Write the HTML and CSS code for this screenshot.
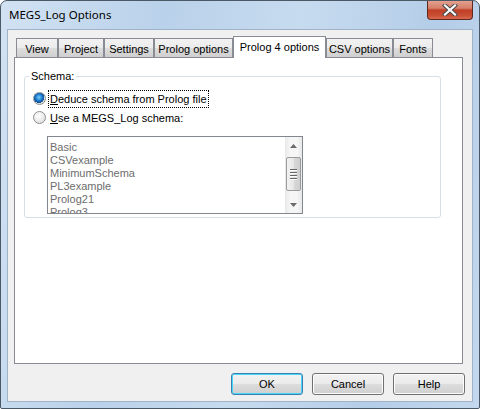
FILE: index.html
```html
<!DOCTYPE html>
<html>
  <head>
    <title>MEGS_Log Options</title>
    <link rel="stylesheet" href="styles.css">
  </head>
  <body>
    <div class="window">
      <div class="titlebar">
        <span class="title">MEGS_Log Options</span>
        <div class="close">
          <svg width="16" height="12" viewBox="0 0 16 12">
            <path d="M3 1.5 L13 10.5 M13 1.5 L3 10.5" stroke="#4a4a4a" stroke-width="4.2" stroke-linecap="square"/>
            <path d="M3 1.5 L13 10.5 M13 1.5 L3 10.5" stroke="#ffffff" stroke-width="2.2" stroke-linecap="square"/>
          </svg>
        </div>
      </div>

      <div class="client">
        <div class="tabctl">
          <div class="tabstrip">
            <div class="tab tab-view">View</div>
            <div class="tab tab-project">Project</div>
            <div class="tab tab-settings">Settings</div>
            <div class="tab tab-prolog">Prolog options</div>
            <div class="tab tab-prolog4 selected">Prolog 4 options</div>
            <div class="tab tab-csv">CSV options</div>
            <div class="tab tab-fonts">Fonts</div>
          </div>
          <div class="tabpanel">
            <fieldset class="group">
              <legend>Schema:</legend>
              <div class="radio-row">
                <span class="radio checked"></span>
                <span class="label focus"><u>D</u>educe schema from Prolog file</span>
              </div>
              <div class="radio-row">
                <span class="radio"></span>
                <span class="label"><u>U</u>se a MEGS_Log schema:</span>
              </div>
              <div class="listbox">
                <ul class="items">
                  <li>Basic</li>
                  <li>CSVexample</li>
                  <li>MinimumSchema</li>
                  <li>PL3example</li>
                  <li>Prolog21</li>
                  <li>Prolog3</li>
                </ul>
                <div class="scrollbar">
                  <div class="arrow">
                    <svg width="7" height="4" viewBox="0 0 7 4"><path d="M0 4 L3.5 0 L7 4 Z" fill="#6b6b6b"/></svg>
                  </div>
                  <div class="track">
                    <div class="thumb">
                      <span class="grip"></span>
                      <span class="grip"></span>
                      <span class="grip"></span>
                      <span class="grip"></span>
                    </div>
                  </div>
                  <div class="arrow">
                    <svg width="7" height="4" viewBox="0 0 7 4"><path d="M0 0 L7 0 L3.5 4 Z" fill="#6b6b6b"/></svg>
                  </div>
                </div>
              </div>
            </fieldset>
          </div>
        </div>

        <div class="buttons">
          <div class="btn default">OK</div>
          <div class="btn">Cancel</div>
          <div class="btn">Help</div>
        </div>
      </div>
    </div>
  </body>
</html>
```

FILE: styles.css
```css
body {
  margin: 0;
  font-family: "Liberation Sans", Arial, sans-serif;
  font-size: 11px;
  color: #000;
  background: #fff;
}
.window {
  width: 480px;
  height: 409px;
  box-sizing: border-box;
  border: 1px solid #4b5866;
  border-radius: 7px 7px 2px 2px;
  padding: 0 6px 6px 6px;
  background: linear-gradient(100deg, #d2e2f3 0%, #b9d1ea 30%, #c7dbef 55%, #b4cde8 80%, #c3d8ee 100%);
}
.titlebar {
  height: 28px;
  display: flex;
  justify-content: space-between;
  align-items: flex-start;
}
.title {
  font-family: "Noto Sans", "Open Sans", sans-serif;
  font-size: 11.5px;
  line-height: 28px;
  padding-left: 2px;
}
.close {
  width: 46px;
  height: 19px;
  box-sizing: border-box;
  border: 1px solid #5e2a20;
  border-top: none;
  border-radius: 0 0 4px 4px;
  background: linear-gradient(#e3a08e 0%, #d6806a 40%, #c13f26 50%, #c84e33 80%, #d96a4f 100%);
  display: flex;
  align-items: center;
  justify-content: center;
}
.client {
  height: 373px;
  box-sizing: border-box;
  border: 1px solid #9fb2c6;
  background: #f0f0f0;
  padding: 6px 0 0 6px;
}
.tabctl {
  width: 449px;
}
.tabstrip {
  display: flex;
  align-items: flex-end;
  height: 21px;
  padding-left: 2px;
}
.tab {
  height: 19px;
  box-sizing: border-box;
  border: 1px solid #898c95;
  border-bottom: none;
  background: linear-gradient(#f2f2f2, #ebebeb 50%, #dddddd 51%, #cfcfcf);
  text-align: center;
  line-height: 18px;
  padding-top: 1px;
}
.tab.selected {
  height: 22px;
  margin-bottom: -1px;
  background: #fff;
  position: relative;
  z-index: 1;
  line-height: 19px;
}
.tab-view { width: 42px; }
.tab-project { width: 46px; }
.tab-settings { width: 50px; }
.tab-prolog { width: 79px; }
.tab-prolog4 { width: 93px; }
.tab-csv { width: 67px; }
.tab-fonts { width: 40px; }
.tabpanel {
  height: 307px;
  box-sizing: border-box;
  border: 1px solid #898c95;
  background: #fff;
  padding: 12px 0 0 9px;
}
.group {
  width: 417px;
  height: 148px;
  box-sizing: border-box;
  margin: 0;
  border: 1px solid #d5dfe5;
  border-radius: 3px;
  padding: 6px 0 0 4px;
}
.group legend {
  padding: 0 2px;
  line-height: 13px;
}
.radio-row {
  height: 19px;
  display: flex;
  align-items: center;
  margin-left: 4px;
}
.radio {
  width: 13px;
  height: 13px;
  box-sizing: border-box;
  border-radius: 50%;
  border: 1px solid #8e8f8f;
  background: radial-gradient(circle at 40% 35%, #ffffff 0%, #eeeeee 45%, #d4d4d4 100%);
  margin-right: 2px;
}
.radio.checked {
  background:
    radial-gradient(circle at 45% 40%, #7fd0fa 0%, #1f7fd0 35%, #0d4c93 60%, transparent 62%),
    radial-gradient(circle at 40% 35%, #ffffff 0%, #eeeeee 45%, #d4d4d4 100%);
}
.label {
  padding: 2px 1px 1px;
  line-height: 13px;
  border: 1px solid transparent;
}
.label.focus {
  border: 1px dotted #000;
}
.listbox {
  display: flex;
  width: 256px;
  height: 78px;
  box-sizing: border-box;
  border: 1px solid #828790;
  margin: 9px 0 0 18px;
  overflow: hidden;
}
.items {
  flex: 1;
  list-style: none;
  margin: 0;
  padding: 4px 0 0 2px;
  color: #6d6d6d;
  line-height: 13px;
  overflow: hidden;
}
.scrollbar {
  width: 17px;
  display: flex;
  flex-direction: column;
  background: linear-gradient(90deg, #e8e8e8, #f6f6f6 30%, #f6f6f6 70%, #e8e8e8);
}
.arrow {
  height: 17px;
  display: flex;
  align-items: center;
  justify-content: center;
}
.track {
  flex: 1;
  padding: 3px 0 0;
  display: flex;
  align-items: flex-start;
}
.thumb {
  width: 15px;
  height: 34px;
  box-sizing: border-box;
  margin-left: 1px;
  border: 1px solid #9b9b9b;
  border-radius: 2px;
  background: linear-gradient(90deg, #f3f3f3, #e6e6e6 50%, #d8d8d8 51%, #cfcfcf);
  display: flex;
  flex-direction: column;
  justify-content: center;
  align-items: center;
  gap: 1px;
}
.grip {
  width: 7px;
  height: 1px;
  background: #666;
  border-bottom: 1px solid #fff;
}
.buttons {
  display: flex;
  justify-content: flex-end;
  gap: 9px;
  margin-top: 9px;
  padding-right: 7px;
}
.btn {
  width: 72px;
  height: 22px;
  box-sizing: border-box;
  border: 1px solid #707070;
  border-radius: 3px;
  background: linear-gradient(#f2f2f2, #ebebeb 50%, #dddddd 51%, #cfcfcf);
  box-shadow: inset 0 0 0 1px #fcfcfc;
  text-align: center;
  line-height: 20px;
}
.btn.default {
  border-color: #3c7fb1;
  box-shadow: inset 0 0 0 1px #48d7fb;
}
```
